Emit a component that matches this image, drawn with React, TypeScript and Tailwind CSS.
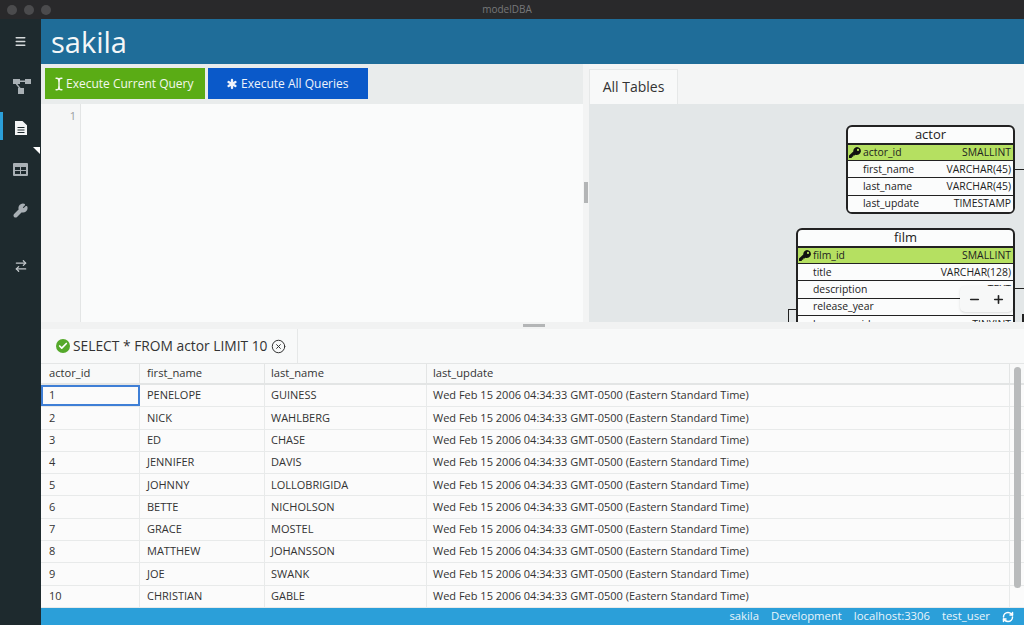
import { Check, CircleX, Asterisk, TextCursor, Plus, Minus, Menu, Wrench, ArrowRightLeft, RefreshCw } from "lucide-react";

const rows = [
  ["1", "PENELOPE", "GUINESS"],
  ["2", "NICK", "WAHLBERG"],
  ["3", "ED", "CHASE"],
  ["4", "JENNIFER", "DAVIS"],
  ["5", "JOHNNY", "LOLLOBRIGIDA"],
  ["6", "BETTE", "NICHOLSON"],
  ["7", "GRACE", "MOSTEL"],
  ["8", "MATTHEW", "JOHANSSON"],
  ["9", "JOE", "SWANK"],
  ["10", "CHRISTIAN", "GABLE"],
];

const stamp = "Wed Feb 15 2006 04:34:33 GMT-0500 (Eastern Standard Time)";

const actorCols = [
  ["first_name", "VARCHAR(45)"],
  ["last_name", "VARCHAR(45)"],
  ["last_update", "TIMESTAMP"],
];

const filmCols = [
  ["title", "VARCHAR(128)"],
  ["description", "TEXT"],
  ["release_year", "YEAR"],
  ["language_id", "TINYINT"],
];

function SchemaIcon() {
  return (
    <svg width="18" height="15" viewBox="0 0 18 15" fill="#a9b0b5">
      <rect x="0" y="0" width="7" height="5" />
      <rect x="12" y="0" width="6" height="5" />
      <rect x="5" y="9" width="6" height="6" />
      <path d="M6 1.500h7v1.500H6zM4 4.500l4 5-1.200.8-4-5z" />
    </svg>
  );
}

function FileIcon() {
  return (
    <svg width="12" height="14" viewBox="0 0 12 14" fill="#f3f5f6">
      <path d="M0 0h7.500L12 4.200V14H0zM2.500 6v1h7V6zM2.500 8.500v1h7v-1zM2.500 11v1h7v-1z" fillRule="evenodd" />
    </svg>
  );
}

function TableIcon() {
  return (
    <svg width="15" height="13" viewBox="0 0 15 13" fill="#a9b0b5">
      <path d="M1 0h13a1 1 0 0 1 1 1v11a1 1 0 0 1-1 1H1a1 1 0 0 1-1-1V1a1 1 0 0 1 1-1zM2 4v3h5V4zM8 4v3h5V4zM2 8v3h5V8zM8 8v3h5V8z" fillRule="evenodd" />
    </svg>
  );
}

function KeyIcon() {
  return (
    <svg width="12" height="11" viewBox="0 0 12 11" fill="#111">
      <path d="M8 0a4 4 0 1 1-1.600 7.700L5.500 8.500H4.200v1.300H2.800V11H0V8.600l4.300-4.200A4 4 0 0 1 8 0zm1 1.800a1.100 1.100 0 1 0 0 2.200 1.100 1.100 0 0 0 0-2.200z" fillRule="evenodd" />
    </svg>
  );
}

function Field({ name, type, pk }: { name: string; type: string; pk?: boolean }) {
  return (
    <div className={`flex h-[17.200px] items-center justify-between border-t border-[#222] pr-[2px] text-[10.400px] leading-none text-[#222] ${pk ? "bg-[#b5e061] border-t-2" : "bg-[#fbfcfc]"}`}>
      <div className="flex items-center">
        <div className="flex w-[15px] justify-start pl-px">
          {pk && <KeyIcon />}
        </div>
        <span>{name}</span>
      </div>
      <span>{type}</span>
    </div>
  );
}

export default function App() {
  return (
    <div className="flex h-[625px] w-[1024px] flex-col overflow-hidden bg-white font-['Open_Sans','Noto_Sans',sans-serif] text-[#333]">
      {/* title bar */}
      <div className="relative flex h-[19px] shrink-0 items-center gap-[7px] bg-[#29292b] pl-[7px]">
        <div className="h-[10px] w-[10px] rounded-full bg-[#4b4b4d]" />
        <div className="h-[10px] w-[10px] rounded-full bg-[#4b4b4d]" />
        <div className="h-[10px] w-[10px] rounded-full bg-[#4b4b4d]" />
        <div className="flex-1 pr-[68px] text-center text-[10px] text-[#77787a]">modelDBA</div>
      </div>

      <div className="flex min-h-0 flex-1">
        {/* sidebar */}
        <div className="relative flex w-[41px] shrink-0 flex-col items-center bg-[#1e2a2e]">
          <div className="mt-[14px] flex h-[16px] items-center"><Menu size={13} strokeWidth={2.500} className="text-[#d5d9db]" /></div>
          <div className="ml-[3px] mt-[29px] flex h-[16px] items-center"><SchemaIcon /></div>
          <div className="relative mt-[18px] flex h-[28px] w-full items-center justify-center pt-[3px]">
            <div className="absolute left-0 top-0 h-full w-[3px] bg-[#2b9fd9]" />
            <FileIcon />
          </div>
          <div className="absolute left-[33px] top-[128px] h-0 w-0 border-l-[7px] border-t-[7px] border-l-transparent border-t-white" />
          <div className="mt-[22px] flex h-[14px] items-center"><TableIcon /></div>
          <div className="mt-[26px] flex h-[16px] items-center"><Wrench size={15} strokeWidth={2.500} fill="currentColor" className="text-[#a9b0b5]" /></div>
          <div className="mt-[40px] flex h-[16px] items-center"><ArrowRightLeft size={14} strokeWidth={2.200} className="text-[#c3c8cb]" /></div>
        </div>

        <div className="flex min-w-0 flex-1 flex-col">
          {/* header */}
          <div className="flex h-[45px] shrink-0 items-center bg-[#1f6d99] pl-[10px] text-[29px] leading-none text-[#f4f7f8]">sakila</div>

          {/* editor + diagram */}
          <div className="flex h-[258px] shrink-0">
            <div className="flex w-[542px] shrink-0 flex-col">
              <div className="flex h-[40px] shrink-0 items-start gap-[3px] bg-[#e9ecec] pl-[4px] pt-[4px]">
                <button className="flex h-[31px] w-[160px] items-center justify-start pl-[7px] bg-[#5aac15] text-[12px] text-[#f3f8ee]">
                  <TextCursor size={14} strokeWidth={2.500} />
                  Execute Current Query
                </button>
                <button className="flex h-[31px] w-[160px] items-center justify-start gap-px pl-[16px] bg-[#0a59c9] text-[12px] text-[#eef3fb]">
                  <Asterisk size={16} strokeWidth={3.500} />
                  Execute All Queries
                </button>
              </div>
              <div className="flex min-h-0 flex-1">
                <div className="w-[40px] shrink-0 border-r border-[#e3e5e5] bg-[#f5f6f6] pr-[4px] pt-[4px] text-right text-[11px] text-[#9a9d9f]">1</div>
                <div className="flex-1 bg-[#fafbfb]" />
              </div>
            </div>

            {/* splitter */}
            <div className="flex w-[6px] shrink-0 items-start justify-center bg-[#f3f4f4]">
              <div className="mt-[118px] h-[21px] w-[4px] bg-[#b3b5b6]" />
            </div>

            <div className="flex min-w-0 flex-1 flex-col bg-[#f4f5f5]">
              <div className="flex h-[40px] shrink-0 items-end">
                <div className="flex h-[35px] w-[89px] items-center justify-center border-x border-t border-[#e6e8e8] bg-[#f8f9f9] pb-[2px] text-[14px] text-[#333]">All Tables</div>
              </div>
              <div className="relative min-h-0 flex-1 overflow-hidden bg-[#e3e7e8]">
                <div className="absolute left-[257px] top-[21px] w-[169px] overflow-hidden rounded-[6px] border-2 border-[#222] bg-[#fbfcfc]">
                  <div className="flex h-[16px] items-center justify-center pb-[2px] text-[13px] leading-none text-[#222]">actor</div>
                  <Field name="actor_id" type="SMALLINT" pk />
                  {actorCols.map(([n, t]) => <Field key={n} name={n} type={t} />)}
                </div>
                <div className="absolute left-[426px] top-[65px] h-px w-[10px] bg-[#222]" />
                <div className="absolute left-[207px] top-[124px] w-[219px] overflow-hidden rounded-t-[6px] border-2 border-[#222] bg-[#fbfcfc]">
                  <div className="flex h-[16px] items-center justify-center pb-[2px] text-[13px] leading-none text-[#222]">film</div>
                  <Field name="film_id" type="SMALLINT" pk />
                  {filmCols.map(([n, t]) => <Field key={n} name={n} type={t} />)}
                </div>
                <div className="absolute left-[426px] top-[184px] h-px w-[10px] bg-[#222]" />
                <div className="absolute left-[199px] top-[205px] h-[20px] w-[8px] border-l border-t border-[#222]" />
                <div className="absolute left-[433px] top-[210px] h-[8px] w-[2px] bg-[#222]" />
                <div className="absolute left-[371px] top-[182px] flex h-[26px] w-[53px] items-center justify-around rounded-[5px] bg-[#f7f8f8] px-[3px] text-[#222] shadow-sm">
                  <Minus size={13} strokeWidth={3} />
                  <Plus size={13} strokeWidth={3} />
                </div>
              </div>
            </div>
          </div>

          {/* vertical splitter */}
          <div className="flex h-[7px] shrink-0 items-center justify-center bg-[#f1f2f2]">
            <div className="ml-[2px] h-[3px] w-[22px] bg-[#b3b5b6]" />
          </div>

          {/* result tab */}
          <div className="flex h-[35px] shrink-0 items-stretch border-b border-[#e4e6e6] bg-[#f8f9f9]">
            <div className="flex w-[257px] items-center gap-[3px] border-r border-[#e6e8e8] pl-[15px] text-[13.800px] text-[#333]">
              <span className="flex h-[14px] w-[14px] items-center justify-center rounded-full bg-[#55a92b]"><Check size={10} strokeWidth={4} className="text-white" /></span>
              <span>SELECT * FROM actor LIMIT 10</span>
              <CircleX size={15} strokeWidth={1.600} className="text-[#333]" />
            </div>
          </div>

          {/* result grid */}
          <div className="relative min-h-0 flex-1 overflow-hidden bg-[#fbfbfb] text-[11px] text-[#333]">
            <div className="flex h-[21px] items-center border-b-2 border-[#e3e5e5] bg-[#f8f9f9] text-[11.200px]">
              <div className="flex h-full w-[99px] items-center border-r border-[#e3e5e5] pl-[8px]">actor_id</div>
              <div className="flex h-full w-[125px] items-center border-r border-[#e3e5e5] pl-[7px]">first_name</div>
              <div className="flex h-full w-[162px] items-center border-r border-[#e3e5e5] pl-[6px]">last_name</div>
              <div className="flex h-full w-[583px] items-center border-r border-[#e3e5e5] pl-[6px]">last_update</div>
            </div>
            {rows.map((r, i) => (
              <div key={r[0]} className="flex h-[22.300px] items-center border-b border-[#e8eaea] bg-[#fbfbfb]">
                <div className={`flex h-full w-[99px] items-center pl-[6px] ${i === 0 ? "border-2 border-[#3f7fd6]" : "border-r border-[#e8eaea] pl-[8px]"}`}>{r[0]}</div>
                <div className="flex h-full w-[125px] items-center border-r border-[#e8eaea] pl-[7px]">{r[1]}</div>
                <div className="flex h-full w-[162px] items-center border-r border-[#e8eaea] pl-[6px]">{r[2]}</div>
                <div className="flex h-full w-[583px] items-center border-r border-[#e8eaea] pl-[6px]">{stamp}</div>
              </div>
            ))}
            <div className="absolute right-[3px] top-[3px] h-[221px] w-[7px] rounded-full bg-[#b9bbbc]" />
          </div>

          {/* status bar */}
          <div className="flex h-[17px] shrink-0 items-center justify-end gap-[12px] bg-[#2b9fd9] pr-[10px] text-[11.300px] text-[#eaf5fb]">
            <span>sakila</span>
            <span>Development</span>
            <span>localhost:3306</span>
            <span>test_user</span>
            <RefreshCw size={12} strokeWidth={3} className="text-white" />
          </div>
        </div>
      </div>
    </div>
  );
}
